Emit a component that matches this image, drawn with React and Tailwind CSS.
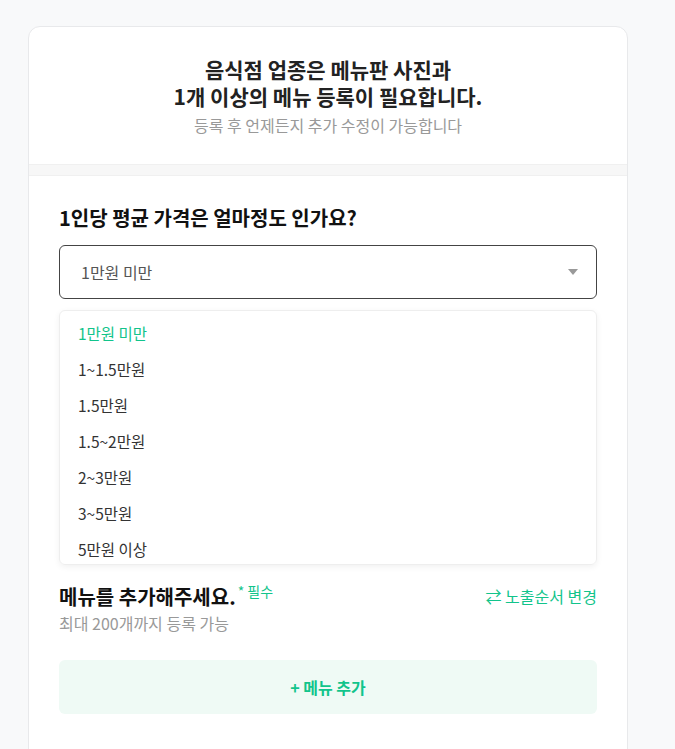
import React, { useState } from 'react';

const PRICE_OPTIONS = ['1만원 미만', '1~1.5만원', '1.5만원', '1.5~2만원', '2~3만원', '3~5만원', '5만원 이상'];

const App = () => {
  const [selected, setSelected] = useState(PRICE_OPTIONS[0]);

  return (
    <div
      className="min-h-[749px] bg-[#f8f9fa] pt-[26px] pl-[28px]"
      style={{ fontFamily: '"Noto Sans CJK KR", "Noto Sans", sans-serif' }}
    >
      <div className="w-[600px] bg-white border border-[#e8e9eb] rounded-[12px] min-h-[740px] overflow-hidden">
        {/* header */}
        <div className="h-[137px] flex flex-col items-center pt-[29px]">
          <h1 className="text-[21px] leading-[27px] font-bold text-[#222] text-center">
            음식점 업종은 메뉴판 사진과
            <br />
            1개 이상의 메뉴 등록이 필요합니다.
          </h1>
          <p className="mt-[5px] text-[16px] leading-[20px] text-[#999]">등록 후 언제든지 추가 수정이 가능합니다</p>
        </div>
        <div className="h-[12px] bg-[#f7f7f7] border-y border-[#f0f0f0]" />

        {/* price */}
        <div className="px-[30px] pt-[28px]">
          <h2 className="text-[20px] leading-[27px] font-bold text-[#111]">1인당 평균 가격은 얼마정도 인가요?</h2>
          <div className="mt-[14px] h-[54px] border border-[#444] rounded-[6px] flex items-center justify-between pl-[21px] pr-[18px]">
            <span className="text-[16px] text-[#555]">{selected}</span>
            <span className="w-0 h-0 border-l-[5px] border-r-[5px] border-t-[6px] border-l-transparent border-r-transparent border-t-[#999]" />
          </div>
          <ul className="mt-[11px] h-[255px] overflow-hidden border border-[#eeeeee] rounded-[6px] shadow-[0_2px_6px_rgba(0,0,0,0.06)] pt-[5px]">
            {PRICE_OPTIONS.map(opt => (
              <li
                key={opt}
                onClick={() => setSelected(opt)}
                className={`h-[36px] flex items-center pl-[18px] text-[15.5px] cursor-pointer ${
                  opt === selected ? 'text-[#12c48b]' : 'text-[#333]'
                }`}
              >
                {opt}
              </li>
            ))}
          </ul>

          {/* menu */}
          <div className="mt-[18px] flex items-start justify-between">
            <div>
              <div className="flex items-start">
                <h2 className="text-[20px] leading-[27px] font-bold text-[#111]">메뉴를 추가해주세요.</h2>
                <span className="ml-[2px] text-[14px] leading-[16px] text-[#12c48b]">* 필수</span>
              </div>
              <p className="mt-[2px] text-[16px] leading-[22px] text-[#999]">최대 200개까지 등록 가능</p>
            </div>
            <button className="text-[16px] leading-[27px] text-[#12c48b]">⇄ 노출순서 변경</button>
          </div>
          <button className="mt-[26px] w-full h-[54px] rounded-[6px] bg-[#effaf5] text-[16px] font-bold text-[#12c48b]">
            + 메뉴 추가
          </button>
        </div>
      </div>
    </div>
  );
};

export default App;
